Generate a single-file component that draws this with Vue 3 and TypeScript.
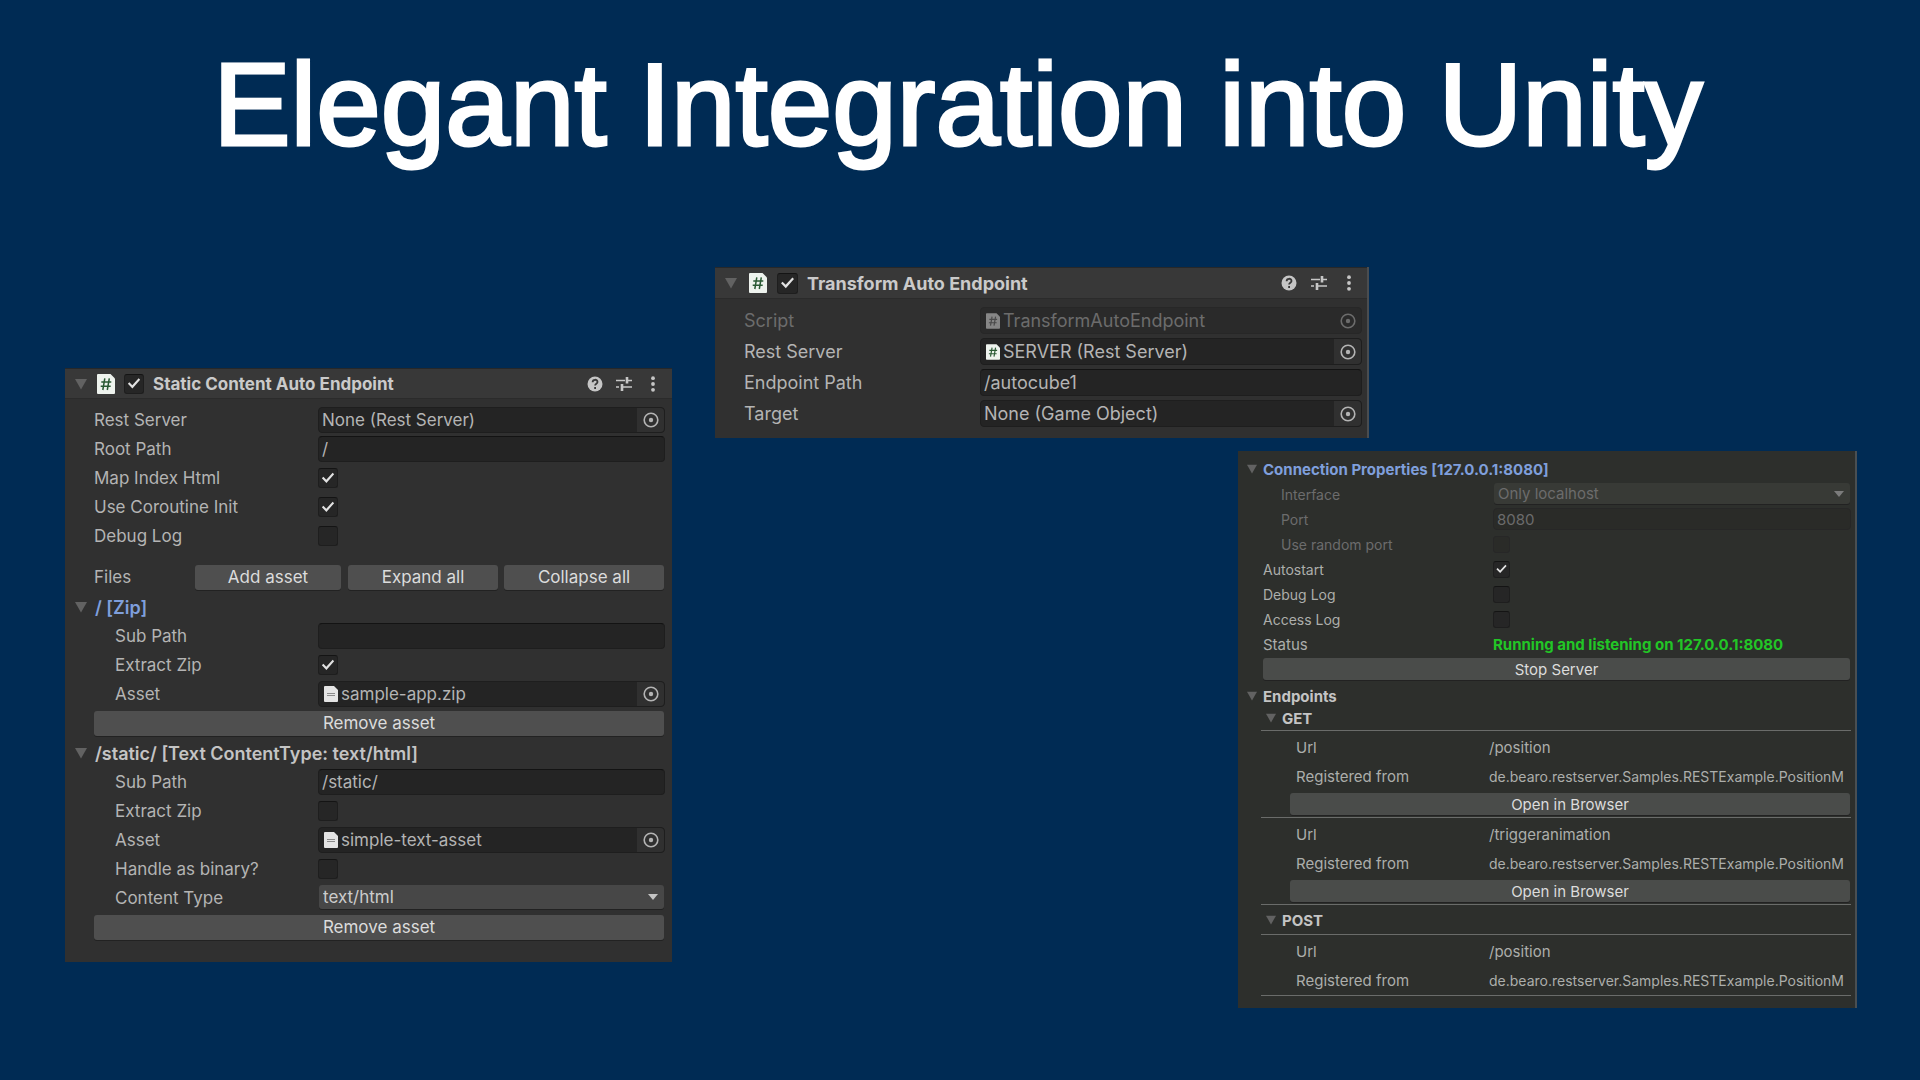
<script setup lang="ts">
import { ref } from 'vue'

interface Endpoint {
  url: string
  source: string
  browsable: boolean
}

interface EndpointGroup {
  method: string
  endpoints: Endpoint[]
}

const source = 'de.bearo.restserver.Samples.RESTExample.PositionM'

const groups: EndpointGroup[] = [
  {
    method: 'GET',
    endpoints: [
      { url: '/position', source, browsable: true },
      { url: '/triggeranimation', source, browsable: true },
    ],
  },
  {
    method: 'POST',
    endpoints: [{ url: '/position', source, browsable: false }],
  },
]

const staticEnabled = ref(true)
const rootPath = ref('/')
const mapIndex = ref(true)
const coroutineInit = ref(true)
const staticDebug = ref(false)
const zipSubPath = ref('')
const zipExtract = ref(true)
const textSubPath = ref('/static/')
const textExtract = ref(false)
const textBinary = ref(false)
const contentType = ref('text/html')

const transformEnabled = ref(true)
const endpointPath = ref('/autocube1')

const networkInterface = ref('Only localhost')
const port = ref('8080')
const randomPort = ref(false)
const autostart = ref(true)
const serverDebug = ref(false)
const accessLog = ref(false)
</script>

<template>
  <main class="slide">
    <svg class="defs" aria-hidden="true">
      <symbol id="i-fold" viewBox="0 0 12 12"><path d="M0 1h12L6 11.500z" fill="currentColor" /></symbol>
      <symbol id="i-drop" viewBox="0 0 10 6"><path d="M0 0h10L5 6z" fill="currentColor" /></symbol>
      <symbol id="i-script" viewBox="0 0 18 20">
        <path d="M1 0h12.500L18 4.500V19a1 1 0 0 1-1 1H1a1 1 0 0 1-1-1V1a1 1 0 0 1 1-1z" fill="currentColor" />
        <path d="M7.800 4.300 5.800 16M12.300 4.300l-2 11.700M4.300 8h10M3.700 12.300h10" fill="none" stroke="var(--hash)" stroke-width="1.500" />
      </symbol>
      <symbol id="i-text" viewBox="0 0 14 16">
        <path d="M1 0h9l4 4v11a1 1 0 0 1-1 1H1a1 1 0 0 1-1-1V1a1 1 0 0 1 1-1z" fill="#e4e4e4" />
        <path d="M3 7.500h8M3 9.500h8" stroke="#8a8a8a" stroke-width="1" />
      </symbol>
      <symbol id="i-help" viewBox="0 0 16 16">
        <circle cx="8" cy="8" r="7.500" fill="currentColor" />
        <path d="M5.600 6.200c0-3.200 4.900-3.200 4.900-.2 0 1.800-2.400 1.700-2.400 3.600M8.100 11v1.900" fill="none" stroke="#383838" stroke-width="1.800" />
      </symbol>
      <symbol id="i-sliders" viewBox="0 0 16 16">
        <path d="M0 4.500h9M10.500 4.500H16M0 11h3M5.500 11H16" fill="none" stroke="currentColor" stroke-width="1.700" />
        <path d="M11 1v6.500M6 8v7" fill="none" stroke="currentColor" stroke-width="2.600" />
      </symbol>
      <symbol id="i-more" viewBox="0 0 6 16">
        <circle cx="3" cy="2.200" r="1.900" fill="currentColor" />
        <circle cx="3" cy="8" r="1.900" fill="currentColor" />
        <circle cx="3" cy="13.800" r="1.900" fill="currentColor" />
      </symbol>
      <symbol id="i-pick" viewBox="0 0 16 16">
        <circle cx="8" cy="8" r="6.800" fill="none" stroke="currentColor" stroke-width="1.600" />
        <circle cx="8" cy="8" r="2.200" fill="currentColor" />
      </symbol>
    </svg>

    <h1>Elegant Integration into Unity</h1>

    <div class="stage">
      <section class="panel static">
        <header class="bar">
          <svg class="fold"><use href="#i-fold" /></svg>
          <svg class="script"><use href="#i-script" /></svg>
          <input id="s-on" v-model="staticEnabled" type="checkbox" />
          <label for="s-on" class="title">Static Content Auto Endpoint</label>
          <button class="icon" aria-label="Help"><svg><use href="#i-help" /></svg></button>
          <button class="icon" aria-label="Presets"><svg><use href="#i-sliders" /></svg></button>
          <button class="icon" aria-label="More"><svg><use href="#i-more" /></svg></button>
        </header>
        <div class="body">
          <div class="row">
            <label for="s-server">Rest Server</label>
            <div class="object">
              <input id="s-server" value="None (Rest Server)" readonly />
              <button class="pick" aria-label="Pick server"><svg><use href="#i-pick" /></svg></button>
            </div>
          </div>
          <div class="row">
            <label for="s-root">Root Path</label>
            <input id="s-root" v-model="rootPath" class="field" />
          </div>
          <div class="row">
            <label for="s-map">Map Index Html</label>
            <input id="s-map" v-model="mapIndex" type="checkbox" />
          </div>
          <div class="row">
            <label for="s-co">Use Coroutine Init</label>
            <input id="s-co" v-model="coroutineInit" type="checkbox" />
          </div>
          <div class="row">
            <label for="s-debug">Debug Log</label>
            <input id="s-debug" v-model="staticDebug" type="checkbox" />
          </div>
          <div class="row files">
            <span class="caption">Files</span>
            <button class="push add">Add asset</button>
            <button class="push expand">Expand all</button>
            <button class="push collapse">Collapse all</button>
          </div>

          <h2 class="row group blue"><svg class="fold"><use href="#i-fold" /></svg>/ [Zip]</h2>
          <div class="row nested">
            <label for="z-sub">Sub Path</label>
            <input id="z-sub" v-model="zipSubPath" class="field" />
          </div>
          <div class="row nested">
            <label for="z-extract">Extract Zip</label>
            <input id="z-extract" v-model="zipExtract" type="checkbox" />
          </div>
          <div class="row nested">
            <label for="z-asset">Asset</label>
            <div class="object">
              <svg class="doc"><use href="#i-text" /></svg>
              <input id="z-asset" value="sample-app.zip" readonly />
              <button class="pick" aria-label="Pick asset"><svg><use href="#i-pick" /></svg></button>
            </div>
          </div>
          <div class="row"><button class="push wide">Remove asset</button></div>

          <h2 class="row group"><svg class="fold"><use href="#i-fold" /></svg>/static/ [Text ContentType: text/html]</h2>
          <div class="row nested">
            <label for="t-sub">Sub Path</label>
            <input id="t-sub" v-model="textSubPath" class="field" />
          </div>
          <div class="row nested">
            <label for="t-extract">Extract Zip</label>
            <input id="t-extract" v-model="textExtract" type="checkbox" />
          </div>
          <div class="row nested">
            <label for="t-asset">Asset</label>
            <div class="object">
              <svg class="doc"><use href="#i-text" /></svg>
              <input id="t-asset" value="simple-text-asset" readonly />
              <button class="pick" aria-label="Pick asset"><svg><use href="#i-pick" /></svg></button>
            </div>
          </div>
          <div class="row nested">
            <label for="t-binary">Handle as binary?</label>
            <input id="t-binary" v-model="textBinary" type="checkbox" />
          </div>
          <div class="row nested">
            <label for="t-type">Content Type</label>
            <div class="choice">
              <select id="t-type" v-model="contentType"><option>text/html</option></select>
              <svg class="arrow"><use href="#i-drop" /></svg>
            </div>
          </div>
          <div class="row"><button class="push wide">Remove asset</button></div>
        </div>
      </section>

      <section class="panel transform">
        <header class="bar">
          <svg class="fold"><use href="#i-fold" /></svg>
          <svg class="script"><use href="#i-script" /></svg>
          <input id="a-on" v-model="transformEnabled" type="checkbox" />
          <label for="a-on" class="title">Transform Auto Endpoint</label>
          <button class="icon" aria-label="Help"><svg><use href="#i-help" /></svg></button>
          <button class="icon" aria-label="Presets"><svg><use href="#i-sliders" /></svg></button>
          <button class="icon" aria-label="More"><svg><use href="#i-more" /></svg></button>
        </header>
        <div class="body">
          <div class="row dim">
            <label for="a-script">Script</label>
            <div class="object">
              <svg class="doc"><use href="#i-script" /></svg>
              <input id="a-script" value="TransformAutoEndpoint" disabled />
              <button class="pick" aria-label="Pick script" disabled><svg><use href="#i-pick" /></svg></button>
            </div>
          </div>
          <div class="row">
            <label for="a-server">Rest Server</label>
            <div class="object">
              <svg class="doc"><use href="#i-script" /></svg>
              <input id="a-server" value="SERVER (Rest Server)" readonly />
              <button class="pick" aria-label="Pick server"><svg><use href="#i-pick" /></svg></button>
            </div>
          </div>
          <div class="row">
            <label for="a-path">Endpoint Path</label>
            <input id="a-path" v-model="endpointPath" class="field" />
          </div>
          <div class="row">
            <label for="a-target">Target</label>
            <div class="object">
              <input id="a-target" value="None (Game Object)" readonly />
              <button class="pick" aria-label="Pick target"><svg><use href="#i-pick" /></svg></button>
            </div>
          </div>
        </div>
      </section>

      <section class="panel server">
        <div class="body">
          <h2 class="row group blue"><svg class="fold"><use href="#i-fold" /></svg>Connection Properties [127.0.0.1:8080]</h2>
          <div class="row nested dim">
            <label for="c-if">Interface</label>
            <div class="choice">
              <select id="c-if" v-model="networkInterface" disabled><option>Only localhost</option></select>
              <svg class="arrow"><use href="#i-drop" /></svg>
            </div>
          </div>
          <div class="row nested dim">
            <label for="c-port">Port</label>
            <input id="c-port" v-model="port" class="field" disabled />
          </div>
          <div class="row nested dim">
            <label for="c-random">Use random port</label>
            <input id="c-random" v-model="randomPort" type="checkbox" disabled />
          </div>
          <div class="row">
            <label for="c-auto">Autostart</label>
            <input id="c-auto" v-model="autostart" type="checkbox" />
          </div>
          <div class="row">
            <label for="c-debug">Debug Log</label>
            <input id="c-debug" v-model="serverDebug" type="checkbox" />
          </div>
          <div class="row">
            <label for="c-access">Access Log</label>
            <input id="c-access" v-model="accessLog" type="checkbox" />
          </div>
          <div class="row">
            <span class="caption">Status</span>
            <strong class="running">Running and listening on 127.0.0.1:8080</strong>
          </div>
          <div class="row"><button class="push wide">Stop Server</button></div>

          <h2 class="row group endpoints"><svg class="fold"><use href="#i-fold" /></svg>Endpoints</h2>
          <div v-for="group in groups" :key="group.method" class="method">
            <h3 class="group"><svg class="fold"><use href="#i-fold" /></svg>{{ group.method }}</h3>
            <div v-for="endpoint in group.endpoints" :key="endpoint.url" class="endpoint">
              <dl>
                <dt>Url</dt>
                <dd>{{ endpoint.url }}</dd>
                <dt>Registered from</dt>
                <dd class="source">{{ endpoint.source }}</dd>
              </dl>
              <button v-if="endpoint.browsable" class="push open">Open in Browser</button>
            </div>
          </div>
        </div>
      </section>
    </div>
  </main>
</template>

<style>
body {
  background: #002b54;
}
</style>

<style scoped>
.slide {
  min-height: 100vh;
  background: #002b54;
  font-family: Inter, "Liberation Sans", sans-serif;
  color: #b4b4b4;
}

.slide *,
.slide *::after {
  box-sizing: border-box;
}

.defs {
  position: absolute;
  width: 0;
  height: 0;
}

h1 {
  margin: 0;
  padding: 39px 4px 0 0;
  height: 267px;
  text-align: center;
  white-space: nowrap;
  font: 400 116px/132px "Liberation Sans", Arial, sans-serif;
  -webkit-text-stroke: 3px #fff;
  color: #fff;
}

h2,
h3 {
  margin: 0;
  font-size: inherit;
}

/* The last two panels share a band of columns, so they may overlap sideways. */
.stage {
  display: grid;
  grid-template-columns: 65fr 607fr 43fr 523fr 131fr 488fr 63fr;
  align-items: start;
}

.panel {
  --hash: #2a5a34;
  grid-row: 1;
  min-width: 0;
  overflow: hidden;
  background: #303030;
  font-size: var(--size);
}

.static {
  --size: 17px;
  --row: 26px;
  --label: 224px;
  --box: 20px;
  grid-column: 2;
  margin-top: 101px;
  padding-bottom: 22px;
}

.transform {
  --size: 18px;
  --row: 27px;
  --label: 236px;
  --box: 21px;
  grid-column: 4 / 6;
  padding-bottom: 11px;
  border-right: 2px solid #4a4d50;
}

.server {
  --size: 15px;
  --row: 22px;
  --label: 230px;
  --box: 17px;
  grid-column: 5 / 7;
  margin-top: 184px;
  background: #2d2f2c;
  border-right: 2px solid #4a4f52;
  color: #acaeab;
}

/* The middle panel ends inside the shared band, the right one starts before it. */
.transform {
  grid-column: 4 / 6;
}

.server {
  grid-column: 5 / 7;
}

.bar {
  display: flex;
  align-items: center;
  height: 31px;
  padding: 0 5px 0 10px;
  background: #383838;
  border-top: 1px solid #26282a;
  border-bottom: 1px solid #2b2b2b;
}

.transform .bar {
  height: 32px;
  padding-right: 3px;
}

.fold {
  flex: none;
  width: 12px;
  height: 12px;
  color: #626262;
}

.script {
  width: 18px;
  height: 20px;
  margin: 0 9px 0 10px;
  color: #eef3ee;
}

.transform .script {
  margin: 0 10px 0 12px;
}

.title {
  flex: 1;
  padding-left: 9px;
  font-weight: 700;
  color: #cacaca;
}

button,
input,
select {
  margin: 0;
  padding: 0;
  border: 0;
  font: inherit;
  color: inherit;
  background: none;
}

.icon {
  display: flex;
  justify-content: center;
  width: 29px;
  color: #c6c6c6;
}

.transform .icon {
  width: 30px;
}

.icon svg {
  width: 16px;
  height: 16px;
}

.body {
  display: flex;
  flex-direction: column;
  gap: 3px;
  padding: 8px 7px 0 29px;
}

.transform .body {
  gap: 4px;
  padding: 8px 5px 0 29px;
}

.row {
  display: flex;
  align-items: center;
  height: var(--row);
}

.row > label,
.caption {
  flex: none;
  width: var(--label);
}

.nested {
  padding-left: 21px;
}

.nested > label {
  width: calc(var(--label) - 21px);
}

.field,
.object {
  flex: 1;
  min-width: 0;
  height: 100%;
  background: #242424;
  border: 1px solid #1e1e1e;
  border-top-color: #131313;
  border-radius: 4px;
}

.field {
  padding: 0 3px;
}

.object {
  display: flex;
  align-items: center;
  border-top-color: #1e1e1e;
}

.object input {
  flex: 1;
  min-width: 0;
  padding-left: 3px;
}

.doc {
  width: 14px;
  height: 16px;
  margin-left: 5px;
  color: #eef3ee;
}

.pick {
  display: flex;
  align-items: center;
  justify-content: center;
  width: 27px;
  height: 100%;
  background: #303030;
  border-radius: 0 4px 4px 0;
}

.pick svg {
  width: 16px;
  height: 16px;
}

input[type="checkbox"] {
  appearance: none;
  position: relative;
  flex: none;
  width: var(--box);
  height: var(--box);
  background: #262626;
  border: 1px solid #1e1e1e;
  border-top-color: #141414;
  border-radius: 3px;
}

input[type="checkbox"]:checked::after {
  content: "";
  position: absolute;
  inset: 16%;
  background: #e2e2e2;
  clip-path: polygon(0 52%, 12% 40%, 36% 64%, 88% 8%, 100% 20%, 37% 90%);
}

.push {
  height: 25px;
  background: #4f4f4f;
  border-radius: 3px;
  box-shadow: 0 1px 0 #222;
  color: #dcdcdc;
}

.wide {
  flex: 1;
  margin-right: 1px;
}

.files {
  margin-top: 12px;
  padding-right: 1px;
}

.files .caption {
  width: 101px;
}

.add {
  flex: 146;
  margin-right: 7px;
}

.expand {
  flex: 150;
  margin-right: 6px;
}

.collapse {
  flex: 160;
}

.group {
  display: flex;
  align-items: center;
  gap: 8px;
  margin-left: -19px;
  font-weight: 600;
  color: #c4c4c4;
}

.static .group {
  margin-top: 1px;
  font-size: 18px;
}

.slide .blue {
  color: #7f9fdc;
}

.choice {
  position: relative;
  flex: 1;
  align-self: flex-start;
  height: 24px;
  margin: 0 1px;
}

.choice select {
  appearance: none;
  width: 100%;
  height: 100%;
  padding: 0 4px;
  background: #474747;
  border-radius: 3px;
  box-shadow: 0 1px 0 #222;
  color: #cccccc;
  opacity: 1;
}

.arrow {
  position: absolute;
  right: 6px;
  top: 9px;
  width: 10px;
  height: 6px;
  color: #c4c4c4;
}

.dim,
.choice select:disabled {
  color: #6c6c6c;
}

.dim .arrow {
  color: #7c7c7c;
}

.dim .field,
.dim .object,
.dim .pick,
.dim input[type="checkbox"] {
  background: #2a2a2a;
  border-color: #272727;
}

.dim .doc {
  --hash: #4a4a4a;
  color: #868686;
}

.server .body {
  padding: 7px 4px 12px 25px;
}

.server .row > label {
  font-size: 14px;
}

.server .push {
  height: 22px;
  background: #4a4c4a;
}

.server .group {
  gap: 6px;
  margin-left: -16px;
  font-weight: 700;
}

.server .endpoints {
  margin-top: 2px;
}

.server .fold {
  width: 10px;
  height: 10px;
}

.server .nested {
  padding-left: 18px;
}

.server .nested > label {
  width: calc(var(--label) - 18px);
}

.server .choice {
  height: 21px;
}

.server .choice select {
  background: #383a36;
}

.server .arrow {
  top: 8px;
}

.server .dim .field,
.server .dim input[type="checkbox"] {
  background: #2a2b28;
}

.running {
  font-weight: 700;
  color: #22c626;
}

.method {
  margin-left: -2px;
}

.server .method .group {
  height: 22px;
  margin: -3px 0 1px 5px;
}

.server .method + .method .group {
  margin: 1px 0 3px 5px;
}

.endpoint {
  padding-left: 29px;
  border-top: 1px solid #6a6c6a;
}

.endpoint:last-child {
  border-bottom: 1px solid #6a6c6a;
}

.open {
  display: block;
  width: calc(100% - 1px);
  margin: 2px 0;
}

dl {
  display: grid;
  grid-template-columns: 193px 1fr;
  grid-auto-rows: 29px;
  align-items: center;
  margin: 2px 0 0 6px;
}

dd {
  min-width: 0;
  margin: 0;
  white-space: nowrap;
}

.source {
  font-size: 14px;
}
</style>
